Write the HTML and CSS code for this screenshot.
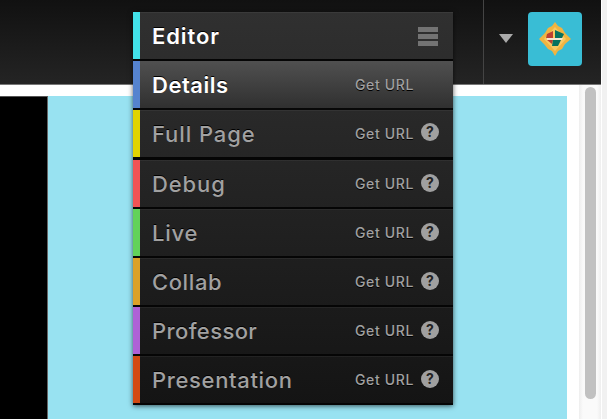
FILE: index.html
```
<!DOCTYPE html>
<html lang="en">
<head>
<meta charset="utf-8">
<title>Editor</title>
<link rel="stylesheet" href="styles.css">
</head>
<body>
<div class="app">
  <div class="main">
    <header class="topbar">
      <div class="account">
        <span class="caret"></span>
        <span class="avatar">
          <svg width="32" height="34" viewBox="0 0 32 34">
            <path d="M16 0l3 4 4 2 3 5 6 6-6 5-3 5-4 2-3 5-3-5-4-2-4-5-5-5 6-6 3-5 4-2z" fill="#f0b441"/>
            <path d="M16 5l11 12-11 12L5 17z" fill="#f8ca62"/>
            <path d="M8 12l6-3v7H7z" fill="#bd4032"/>
            <path d="M16 8l9 4-2 4h-7z" fill="#08725f"/>
            <path d="M8 16h16l-1 2H8z" fill="#f5e5cf"/>
            <path d="M8 18h6l-1 4z" fill="#bd4032"/>
            <path d="M14 18h8l-3 6h-6z" fill="#08725f"/>
          </svg>
        </span>
      </div>
    </header>
    <div class="stage">
      <div class="page"><div class="black"></div><div class="canvas"></div></div>
      <div class="track"><div class="thumb"></div></div>
    </div>
  </div>
  <div class="edge"></div>
</div>
<nav class="menu">
  <div class="row editor"><span class="name">Editor</span><span class="bars"><i></i><i></i><i></i></span></div>
  <div class="row details"><span class="name">Details</span><span class="url">Get URL</span></div>
  <div class="row full"><span class="name">Full Page</span><span class="url">Get URL</span><span class="help">?</span></div>
  <div class="row debug"><span class="name">Debug</span><span class="url">Get URL</span><span class="help">?</span></div>
  <div class="row live"><span class="name">Live</span><span class="url">Get URL</span><span class="help">?</span></div>
  <div class="row collab"><span class="name">Collab</span><span class="url">Get URL</span><span class="help">?</span></div>
  <div class="row professor"><span class="name">Professor</span><span class="url">Get URL</span><span class="help">?</span></div>
  <div class="row presentation"><span class="name">Presentation</span><span class="url">Get URL</span><span class="help">?</span></div>
</nav>
</body>
</html>
```
FILE: styles.css
```
* { box-sizing: border-box; }
body { margin: 0; overflow: hidden; background: #fff; font-family: Inter, "Liberation Sans", sans-serif; }
.app { display: flex; height: 419px; }
.main { flex: 1; display: flex; flex-direction: column; }
.edge { width: 6px; background: #f1f1f1; border-left: 1px solid #fff; }
.topbar { height: 85px; background: linear-gradient(#111, #242424); border-bottom: 1px solid #777; display: flex; justify-content: flex-end; }
.account { width: 118px; border-left: 1px solid #444; display: flex; padding-left: 15px; }
.caret { width: 0; height: 0; margin-top: 34px; border: 7px solid transparent; border-top: 9px solid #aaa; border-bottom: 0; }
.avatar { width: 54px; height: 54px; margin: 12px 0 0 15px; border-radius: 4px; background: #39bdd5; display: flex; align-items: center; justify-content: center; }
.stage { flex: 1; display: flex; }
.page { flex: 1; display: flex; padding: 11px 12px 0 0; }
.black { width: 48px; background: #000; border-top: 1px solid #555; border-right: 1px solid #666; }
.canvas { flex: 1; background: #98e2f1; }
.track { width: 22px; background: linear-gradient(90deg, #eee, #fafafa 4px, #fafafa 18px, #eee); padding: 2px 5px 0 6px; }
.thumb { height: 312px; border-radius: 6px; background: #c1c1c1; }

.menu { position: absolute; left: 133px; top: 12px; width: 320px; background: linear-gradient(#303030, #141414); box-shadow: 0 1px 5px rgba(0, 0, 0, .65); }
.row { height: 49px; display: flex; align-items: center; padding: 0 14px 0 12px; border-left: 7px solid; border-image: linear-gradient(var(--tab) 47px, #080808 47px) 0 0 0 7; background: linear-gradient(#ffffff0c 1px, transparent 1px, transparent 47px, #050505 47px); color: #a1a1a1; }
.name { flex: 1; font-size: 22px; line-height: 26px; font-weight: 550; letter-spacing: var(--track, .5px); text-shadow: 0 -1px #000; white-space: nowrap; margin-top: -1px; }
.url { width: 66px; font-size: 14px; line-height: 18px; font-weight: 550; letter-spacing: .65px; text-shadow: 0 1px #000; white-space: nowrap; margin-top: -2px; }
.help { width: 18px; height: 18px; border-radius: 50%; background: #a0a0a0; color: #222; font-size: 14px; line-height: 18px; font-weight: 700; text-align: center; margin-top: -4px; }
.bars { display: flex; flex-direction: column; gap: 2px; width: 20px; }
.bars i { height: 5px; background: #737373; }
.editor { --tab: #42e1e9; --track: .9px; color: #fff; }
.editor .name, .details .name { font-weight: 600; }
.editor .bars { margin-right: 1px; }
.details { --tab: #5583cf; --track: .5px; color: #fff; background: linear-gradient(#505050, #303030 47px, #080808 47px); }
.details .url { width: 84px; color: #a1a1a1; }
.full { --tab: #e0d300; --track: .9px; height: 50px; }
.full .name { margin-top: -3px; }
.full .help { margin-top: -6px; }
.debug { --tab: #f15454; --track: .9px; }
.live { --tab: #62d25a; --track: .8px; }
.collab { --tab: #dba128; --track: .6px; }
.professor { --tab: #ae61d6; --track: .4px; }
.presentation { --tab: #d34b13; --track: .65px; }
```
